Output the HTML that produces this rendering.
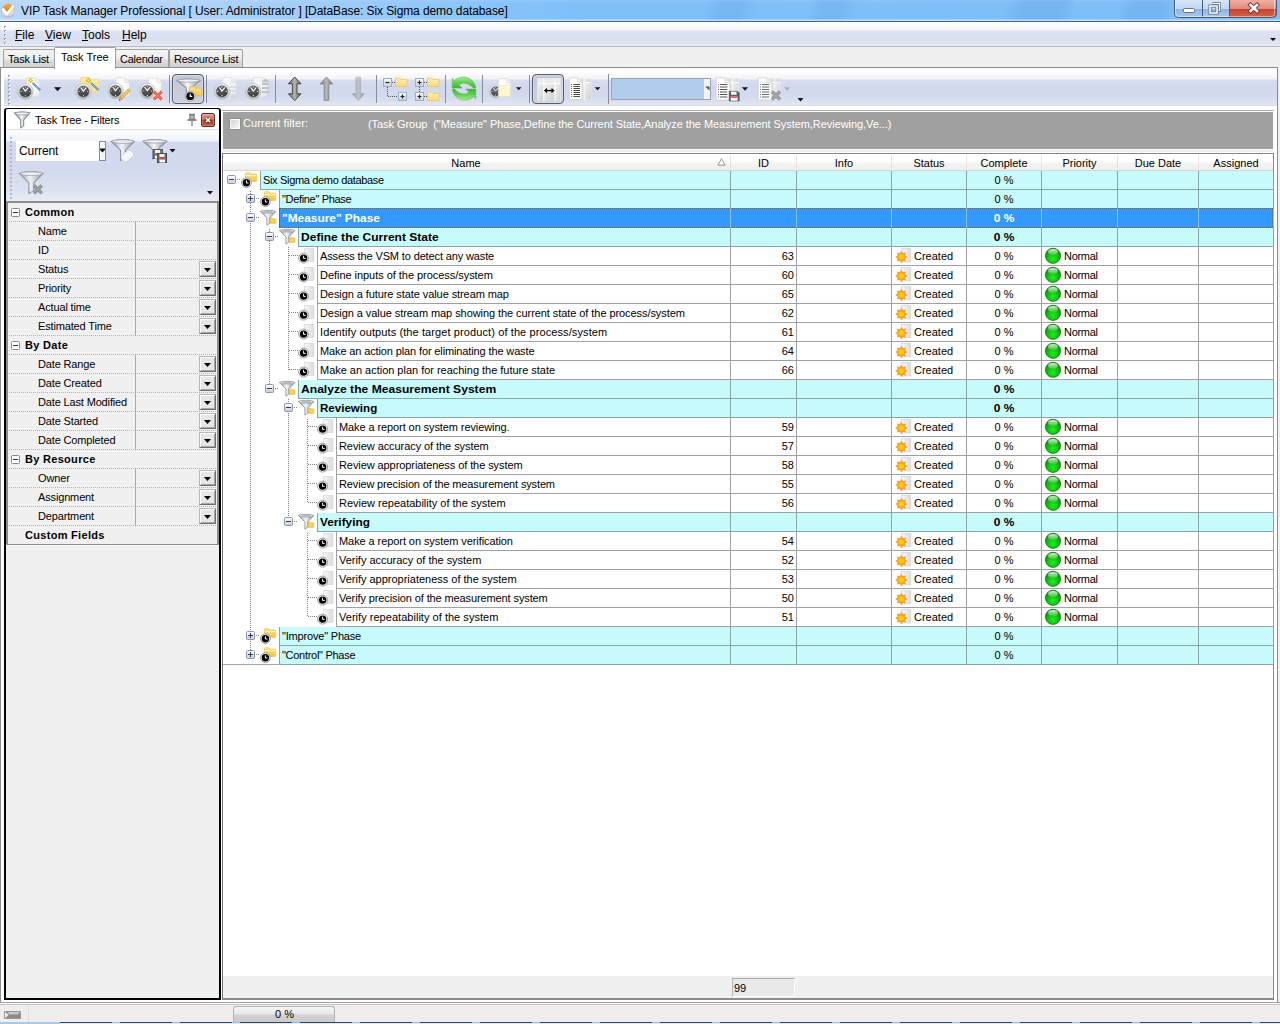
<!DOCTYPE html>
<html><head><meta charset="utf-8"><title>VIP Task Manager Professional</title>
<style>
*{box-sizing:border-box;margin:0;padding:0}
html,body{width:1280px;height:1024px;overflow:hidden;background:#f0f0f0}
body{position:relative;font-family:"Liberation Sans",sans-serif;font-size:11px;color:#000}
div,svg,span{position:absolute}
.t{white-space:nowrap;line-height:14px}
/* title bar */
#title{left:0;top:0;width:1280px;height:21px;background:linear-gradient(105deg,transparent 0,transparent 683px,rgba(40,100,170,.10) 698px,rgba(40,100,170,.10) 718px,transparent 733px,transparent 783px,rgba(40,100,170,.09) 795px,rgba(40,100,170,.09) 815px,transparent 830px,transparent 972px,rgba(40,100,170,.11) 990px,rgba(40,100,170,.11) 1028px,transparent 1040px,transparent 1083px,rgba(40,100,170,.09) 1095px,rgba(40,100,170,.09) 1125px,transparent 1140px),linear-gradient(90deg,#b9d7f8 0,#b5d5f8 150px,#a2cdf8 300px,#8dc5f9 450px,#80c0fa 570px,#7fbff9 900px,#7dbdf8 1280px)}
#titlesh{left:0;top:0;width:1280px;height:21px;background:linear-gradient(180deg,rgba(255,255,255,.10) 0,rgba(255,255,255,0) 3px,rgba(255,255,255,0) 19px,rgba(255,255,255,.5) 20px,rgba(255,255,255,.55) 21px)}
#titleline{left:0;top:21px;width:1280px;height:1px;background:#4c5f76}
#titletxt{left:21px;top:4px;font-size:12px;letter-spacing:-0.095px;color:#000;line-height:15px;white-space:nowrap}
/* menubar */
#menubar{left:0;top:22px;width:1280px;height:25px;background:linear-gradient(180deg,#ffffff 0,#f4f5fb 8px,#dfe3f1 9px,#d9deef 17px,#e3e6f3 23px,#eceef6 24px)}
#menuline{left:0;top:46px;width:1280px;height:1px;background:#b4b8c6}
.mi{top:28px;font-size:12px;line-height:15px;white-space:nowrap}
.mi u{text-decoration:underline;text-underline-offset:1px}
/* tabs */
.tab{top:49px;height:18px;border:1px solid #a0a0a0;border-bottom:none;background:linear-gradient(180deg,#f4f4f4 0,#ececec 9px,#dcdcdc 10px,#d2d2d2 17px);font-size:11px;line-height:12px;white-space:nowrap;border-radius:2px 2px 0 0}
.tab span{position:absolute;top:3px;left:4px;letter-spacing:-.23px}
.tab.act{top:47px;height:22px;background:#fff;z-index:3}
.tab.act span{top:3px;left:6px;letter-spacing:0}
#page{left:0px;top:67px;width:1278px;height:936px;background:#fff;border:1px solid #8c8c8c;border-top-color:#8c8c8c}
/* toolbar */
#tb{left:4px;top:72px;width:1273px;height:34px;background:linear-gradient(180deg,#fefefe 0,#f1f3f9 7px,#d9deef 8px,#d3d9ed 14px,#d4daed 24px,#dce0f0 30px,#e6e9f4 33px,#c9cddb 34px)}
.sep{top:77px;width:1px;height:26px;background:#8a8f9c;box-shadow:1px 0 0 #f4f5fa}
.dd{width:0;height:0;border-left:3px solid transparent;border-right:3px solid transparent;border-top:3px solid #000}
.pressed{border:1px solid #555d6b;border-radius:4px;background:linear-gradient(180deg,#c4c7d6,#cccfdc);box-shadow:inset 0 0 0 1px rgba(255,255,255,.3)}
/* grid */
#grid{left:0;top:0;width:1280px;height:1024px}
.row{left:0;width:1280px;height:19px}
.row>div{white-space:nowrap;line-height:13px}
.row .bg{top:0;height:19px;background:#fff;border-left:1px solid #a0a0a0;border-bottom:1px solid #a0a0a0}
.row.grp .bg{background:#c7fafa;border-color:#88a6a6}
.row.sel .bg{background:#3399ff;top:-1px;height:20px;border-bottom:none;outline:1px dotted #6b6357;outline-offset:-1px;border-left-color:#6b6357}
.nm{top:3px}
.b{font-weight:bold;font-size:11px;transform-origin:0 0}
.nm.b{top:3px}
.row.sel .nm,.row.sel .cco{color:#fff}
.cid{left:731px;width:63px;text-align:right;top:3px}
.cst{left:914px;top:3px}
.cpr{left:1064px;top:3px;letter-spacing:-.3px}
.cco{left:967px;width:74px;text-align:center;top:3px}
.cco.b{top:3px;transform:scaleX(1.09);transform-origin:50% 0}
.ic{overflow:visible}
.vl{width:1px;background-image:repeating-linear-gradient(180deg,#808080 0,#808080 1px,transparent 1px,transparent 2px)}
.hl{height:1px;background-image:repeating-linear-gradient(90deg,#808080 0,#808080 1px,transparent 1px,transparent 2px)}
.cv{z-index:1;top:154px;width:1px;height:520px;background:#a0a0a0}
.hd{top:157px;font-size:11px;text-align:center;line-height:13px}
.hs{top:156px;width:1px;height:13px;background:#e2e2e2}
.pl{left:9px;width:208px;height:1px;background-image:repeating-linear-gradient(90deg,#b4b4b4 0,#b4b4b4 1px,transparent 1px,transparent 2px)}
.pb{font-weight:bold;font-size:11px;letter-spacing:.3px}
.pdd{left:199px;width:17px;height:16px;background:#e6e6e6;border:1px solid;border-color:#b8b8b8 #6e6e6e #6e6e6e #b8b8b8;box-shadow:inset 1px 1px 0 #fff,inset -1px -1px 0 #a6a6a6}
.vls{z-index:2;left:730px;top:0;width:544px;height:19px;background:linear-gradient(#88a6a6,#88a6a6) 0px 0/1px 100% no-repeat,linear-gradient(#88a6a6,#88a6a6) 66px 0/1px 100% no-repeat,linear-gradient(#88a6a6,#88a6a6) 161px 0/1px 100% no-repeat,linear-gradient(#88a6a6,#88a6a6) 236px 0/1px 100% no-repeat,linear-gradient(#88a6a6,#88a6a6) 311px 0/1px 100% no-repeat,linear-gradient(#88a6a6,#88a6a6) 387px 0/1px 100% no-repeat,linear-gradient(#88a6a6,#88a6a6) 468px 0/1px 100% no-repeat,linear-gradient(#88a6a6,#88a6a6) 543px 0/1px 100% no-repeat}
.row.sel .vls{top:0;height:18px;background:linear-gradient(#86c3ff,#86c3ff) 0px 0/1px 100% no-repeat,linear-gradient(#86c3ff,#86c3ff) 66px 0/1px 100% no-repeat,linear-gradient(#86c3ff,#86c3ff) 161px 0/1px 100% no-repeat,linear-gradient(#86c3ff,#86c3ff) 236px 0/1px 100% no-repeat,linear-gradient(#86c3ff,#86c3ff) 311px 0/1px 100% no-repeat,linear-gradient(#86c3ff,#86c3ff) 387px 0/1px 100% no-repeat,linear-gradient(#86c3ff,#86c3ff) 468px 0/1px 100% no-repeat,linear-gradient(#86c3ff,#86c3ff) 543px 0/1px 100% no-repeat}

</style></head><body>
<svg width="0" height="0" style="position:absolute;left:-10px;top:-10px">
<defs>
<linearGradient id="gbtn" x1="0" y1="0" x2="0" y2="1"><stop offset="0" stop-color="#ffffff"/><stop offset="1" stop-color="#c9ccd6"/></linearGradient>
<radialGradient id="gclk" cx=".4" cy=".35" r=".7"><stop offset="0" stop-color="#6a6a6a"/><stop offset="1" stop-color="#222"/></radialGradient>
<linearGradient id="gfold" x1="0" y1="0" x2="0" y2="1"><stop offset="0" stop-color="#fde68e"/><stop offset="1" stop-color="#f4c440"/></linearGradient>
<linearGradient id="gfold2" x1="0" y1="0" x2="0" y2="1"><stop offset="0" stop-color="#fff2bd"/><stop offset="1" stop-color="#f7d873"/></linearGradient>
<linearGradient id="gfun" x1="0" y1="0" x2="1" y2="0"><stop offset="0" stop-color="#8d949b"/><stop offset=".45" stop-color="#f4f6f8"/><stop offset="1" stop-color="#8d949b"/></linearGradient>
<linearGradient id="gsheet" x1="0" y1="0" x2="1" y2="1"><stop offset="0" stop-color="#ffffff"/><stop offset=".6" stop-color="#fafafa"/><stop offset="1" stop-color="#e4e4e4"/></linearGradient>
<linearGradient id="gsheet2" x1="0" y1="0" x2="1" y2="0"><stop offset="0" stop-color="#f8f8f8"/><stop offset="1" stop-color="#dcdcdc"/></linearGradient>
<linearGradient id="garrow" x1="0" y1="0" x2="1" y2="0"><stop offset="0" stop-color="#6a6a6a"/><stop offset=".5" stop-color="#b4b4b4"/><stop offset="1" stop-color="#5c5c5c"/></linearGradient>
<linearGradient id="gcell" x1="0" y1="0" x2="1" y2="1"><stop offset="0" stop-color="#eeeeee"/><stop offset="1" stop-color="#d2d2d2"/></linearGradient>
<linearGradient id="ggr2" x1="0" y1="0" x2="0" y2="1"><stop offset="0" stop-color="#a6ec96"/><stop offset=".5" stop-color="#62cf54"/><stop offset="1" stop-color="#3db733"/></linearGradient>

<!-- expand buttons 9x9 -->
<symbol id="minus" viewBox="0 0 9 9"><rect x=".5" y=".5" width="8" height="8" rx="1" fill="url(#gbtn)" stroke="#8f96a3"/><rect x="2" y="4" width="5" height="1" fill="#2a3a6a"/></symbol>
<symbol id="plus" viewBox="0 0 9 9"><rect x=".5" y=".5" width="8" height="8" rx="1" fill="url(#gbtn)" stroke="#8f96a3"/><rect x="2" y="4" width="5" height="1" fill="#2a3a6a"/><rect x="4" y="2" width="1" height="5" fill="#2a3a6a"/></symbol>

<!-- small clock (used in 16px icons) centered at 0,0 radius r -->
<symbol id="clk" viewBox="-5.5 -5.5 11 11" overflow="visible"><circle r="5" fill="#efefef" stroke="#8c8c8c" stroke-width=".8"/><circle r="3.700" fill="#000"/><path d="M0 -2.400V0.300H2.100" stroke="#fff" stroke-width="1" fill="none"/></symbol>

<!-- folder + clock 18x18 -->
<symbol id="ifolder" viewBox="0 0 18 18">
 <path d="M6.300 1.700h3.400l1.200 1.400h5a.8.800 0 0 1 .8.800v5.800a.8.800 0 0 1-.8.800H6.300a.8.800 0 0 1-.8-.8V2.500a.8.800 0 0 1 .8-.8z" fill="url(#gfold)" stroke="#ecc04a" stroke-width=".7"/>
 <path d="M5.800 4.600h10.600" stroke="#fff8d4" stroke-width=".8"/>
 <use href="#clk" x=".9" y="6.200" width="11" height="11"/>
</symbol>

<!-- funnel + small folder -->
<symbol id="ifilt" viewBox="0 0 18 18">
 <path d="M1.400 2.500 Q9.150 .2 16.900 2.500 L10.800 8.900 V14 L7.900 16.200 V8.900 Z" fill="url(#gfun)" stroke="#858c93" stroke-width=".8" stroke-linejoin="round"/>
 <ellipse cx="9.150" cy="2.700" rx="7.500" ry="1.350" fill="#e4e7ea" stroke="#8b9299" stroke-width=".6"/>
 <ellipse cx="9.150" cy="2.900" rx="4.500" ry=".7" fill="#9aa1a8"/>
 <path d="M11.200 9.200h2.200l.7.900h2.700v4.100h-5.600z" fill="#f8d458" stroke="#e3ae26" stroke-width=".7" stroke-linejoin="round"/>
</symbol>

<!-- task: sheet + clock -->
<symbol id="itask" viewBox="0 0 18 18">
 <path d="M7.500 1.500h9.300v13H7.500z" fill="url(#gsheet2)" stroke="#d4d4d4" stroke-width=".7"/>
 <use href="#clk" x="1.100" y="5.600" width="11" height="11"/>
</symbol>

<!-- status created: sheet + sun -->
<radialGradient id="gsun" cx=".5" cy=".5" r=".5"><stop offset="0" stop-color="#ffe11e"/><stop offset=".55" stop-color="#ffc20e"/><stop offset="1" stop-color="#f89a1c"/></radialGradient>
<symbol id="icreated" viewBox="0 0 18 18">
 <path d="M7.300 1.400h9.400v13.500H7.300z" fill="url(#gsheet2)" stroke="#cfcfcf" stroke-width=".7"/>
 <path d="M7.400 3.500l1.500 2.400 2.700-.8-.8 2.700 2.500 1.500-2.500 1.600.8 2.700-2.700-.8-1.500 2.500-1.500-2.500-2.700.8.800-2.700L1.500 9.300 4 7.800l-.8-2.700 2.700.8z" transform="translate(0 .7)" fill="#f9a01e" stroke="#f2921c" stroke-width=".4" stroke-linejoin="round"/>
 <circle cx="7.400" cy="10" r="3.900" fill="url(#gsun)"/>
</symbol>

<!-- priority green ball -->
<radialGradient id="ggreen" cx=".5" cy=".68" r=".62"><stop offset="0" stop-color="#1df01d"/><stop offset=".55" stop-color="#12c012"/><stop offset="1" stop-color="#0b8a0b"/></radialGradient>
<linearGradient id="ghl" x1="0" y1="0" x2="0" y2="1"><stop offset="0" stop-color="#ffffff" stop-opacity=".85"/><stop offset="1" stop-color="#ffffff" stop-opacity=".15"/></linearGradient>
<symbol id="igreen" viewBox="0 0 18 18">
 <circle cx="9" cy="8.800" r="7.600" fill="url(#ggreen)" stroke="#0d7d0d" stroke-width=".8"/>
 <ellipse cx="9" cy="4.900" rx="4.900" ry="2.900" fill="url(#ghl)"/>
</symbol>

<!-- big toolbar clock: 18x18 box, centered at 0,0, ring r=7.8 -->
<linearGradient id="gring" x1="0" y1="0" x2="0" y2="1"><stop offset="0" stop-color="#fafafa"/><stop offset=".55" stop-color="#d6d6d6"/><stop offset="1" stop-color="#b9b9b9"/></linearGradient>
<radialGradient id="gface" cx=".45" cy=".3" r=".8"><stop offset="0" stop-color="#6b6b6b"/><stop offset="1" stop-color="#303030"/></radialGradient>
<symbol id="bclk" viewBox="-9 -9 18 18" overflow="visible">
 <circle r="8.300" fill="#9aa0b0" opacity=".25"/>
 <circle r="7.700" fill="url(#gring)" stroke="#b4b4b4" stroke-width=".5"/>
 <circle r="5.800" fill="url(#gface)" stroke="#8a8a8a" stroke-width=".4"/>
 <path d="M-2.400 -3.600L0 -0.300L2.600 -3.600" stroke="#fff" stroke-width="1.100" fill="none" stroke-linecap="round" stroke-linejoin="round"/>
 <circle cx="0" cy="-4.500" r=".55" fill="#fff"/><circle cx="0" cy="4.300" r=".6" fill="#fff"/><circle cx="-4.300" cy="0" r=".6" fill="#fff"/><circle cx="4.300" cy="0" r=".6" fill="#fff"/>
</symbol>
<!-- big sheet -->
<symbol id="bsheet" viewBox="0 0 16 22" overflow="visible">
 <path d="M.5 .5h10l5 5v16H.5z" fill="url(#gsheet)" stroke="#d5d5d5" stroke-width=".8"/>
 <path d="M10.5 .5v5h5" fill="#f4f4f4" stroke="#d0d0d0" stroke-width=".7"/>
</symbol>
<!-- big funnel -->
<symbol id="bfun" viewBox="0 0 24 24" overflow="visible" preserveAspectRatio="none">
 <path d="M1 3 Q11 -1 21 3 L13.2 12.5 V20.5 L9 23.5 V12.5 Z" fill="url(#gfun)" stroke="#868d94" stroke-width=".9"/>
 <ellipse cx="11" cy="3.3" rx="9.3" ry="1.9" fill="#eef0f2" stroke="#959ca3" stroke-width=".7"/>
</symbol>
</defs></svg>

<!-- title bar -->
<div id="title"></div><div id="titlesh"></div><div id="titleline"></div>
<svg style="left:0px;top:1px" width="18" height="18" viewBox="0 0 18 18">
 <defs><radialGradient id="gapp" cx=".45" cy=".35" r=".75"><stop offset="0" stop-color="#ffffff"/><stop offset=".65" stop-color="#e2e2e2"/><stop offset="1" stop-color="#a2a2a2"/></radialGradient>
 <linearGradient id="gor" x1="0" y1="0" x2="0" y2="1"><stop offset="0" stop-color="#f7a540"/><stop offset="1" stop-color="#ee7f14"/></linearGradient></defs>
 <circle cx="8" cy="9.800" r="6.700" fill="url(#gapp)" stroke="#aaaaaa" stroke-width=".5"/>
 <path d="M2.600 6.600Q4 3.600 7.500 3.100Q10.500 2.800 12.500 4.300L7.200 11.300z" fill="url(#gor)"/>
 <path d="M2.400 7.600L6.900 13.300L13.600 4.400" fill="none" stroke="#b4b4b4" stroke-width="3" stroke-linejoin="round" stroke-linecap="round" opacity=".55" transform="translate(.5 .7)"/>
 <path d="M2.400 7.600L6.900 13.300L13.600 4.400" fill="none" stroke="#ffffff" stroke-width="2.500" stroke-linejoin="round" stroke-linecap="butt"/>
</svg>
<div id="titletxt">VIP Task Manager Professional [ User: Administrator ] [DataBase: Six Sigma demo database]</div>
<!-- caption buttons -->
<svg style="left:1170px;top:0" width="110" height="22" viewBox="1170 0 110 22">
 <defs>
  <linearGradient id="gcb" x1="0" y1="0" x2="0" y2="1"><stop offset="0" stop-color="#d5e6f8"/><stop offset=".48" stop-color="#c0d8f2"/><stop offset=".5" stop-color="#8fb5df"/><stop offset="1" stop-color="#a9cbee"/></linearGradient>
  <linearGradient id="gcx" x1="0" y1="0" x2="0" y2="1"><stop offset="0" stop-color="#f0b0a4"/><stop offset=".48" stop-color="#e08a7c"/><stop offset=".5" stop-color="#c8402c"/><stop offset="1" stop-color="#d4674f"/></linearGradient>
  <clipPath id="cbclip"><path d="M1174 -2h103v15.5a4 4 0 0 1-4 4h-95a4 4 0 0 1-4-4z"/></clipPath>
 </defs>
 <g clip-path="url(#cbclip)">
  <rect x="1174" y="0" width="56" height="18" fill="url(#gcb)"/>
  <rect x="1230" y="0" width="48" height="18" fill="url(#gcx)"/>
 </g>
 <path d="M1174.5 -2v15.5a4 4 0 0 0 4 4h94a4 4 0 0 0 4-4V-2" fill="none" stroke="#4a5a72" stroke-width="1"/>
 <path d="M1202.5 0v17M1229.5 0v17" stroke="#4a5a72" stroke-width="1"/>
 <path d="M1175.5 0v13.5a3 3 0 0 0 3 3h93a3 3 0 0 0 3-3V0" fill="none" stroke="rgba(255,255,255,.45)" stroke-width="1"/>
 <rect x="1183.5" y="8.5" width="11" height="4" rx="1" fill="#fff" stroke="#5a6a80" stroke-width=".9"/>
 <path d="M1212.500 3.5h7v7h-2" fill="none" stroke="#5a6a80" stroke-width="2.6"/><path d="M1212.500 3.5h7v7h-2" fill="none" stroke="#fff" stroke-width="1.2"/>
 <rect x="1210" y="6" width="7" height="7" fill="none" stroke="#5a6a80" stroke-width="3"/><rect x="1210" y="6" width="7" height="7" fill="none" stroke="#fff" stroke-width="1.5"/>
 <path d="M1250.500 5l6.500 6m0-6l-6.500 6" stroke="#6a3030" stroke-width="4.4" stroke-linecap="square"/><path d="M1250.500 5l6.500 6m0-6l-6.500 6" stroke="#fff" stroke-width="2.600" stroke-linecap="square"/>
</svg>
<!-- menu bar -->
<div id="menubar"></div><div id="menuline"></div>
<svg style="left:3px;top:25px" width="4" height="20"><g fill="#9aa0b4"><rect x="1" y="1" width="2" height="2"/><rect x="1" y="5" width="2" height="2"/><rect x="1" y="9" width="2" height="2"/><rect x="1" y="13" width="2" height="2"/><rect x="1" y="17" width="2" height="2"/></g><g fill="#fff"><rect x="2" y="2" width="1" height="1"/><rect x="2" y="6" width="1" height="1"/><rect x="2" y="10" width="1" height="1"/><rect x="2" y="14" width="1" height="1"/><rect x="2" y="18" width="1" height="1"/></g></svg>
<div class="mi" style="left:15px"><u>F</u>ile</div>
<div class="mi" style="left:45px"><u>V</u>iew</div>
<div class="mi" style="left:82px"><u>T</u>ools</div>
<div class="mi" style="left:122px"><u>H</u>elp</div>
<div class="dd" style="left:1270px;top:38px"></div>
<!-- tabs + page -->
<div id="page"></div>
<div class="tab" style="left:3px;width:52px"><span>Task List</span></div>
<div class="tab act" style="left:54px;width:62px"><span>Task Tree</span></div>
<div class="tab" style="left:115px;width:54px"><span>Calendar</span></div>
<div class="tab" style="left:169px;width:74px"><span>Resource List</span></div>
<!-- toolbar -->
<div id="tb"></div>
<div class="pressed" style="left:172px;top:74px;width:32px;height:30px"></div>
<div class="pressed" style="left:532px;top:74px;width:32px;height:30px"></div>
<svg style="left:0;top:66px" width="820" height="46" viewBox="0 66 820 46">
 <!-- grip -->
 <g><rect x="8" y="75" width="2" height="2" fill="#9ea4b6"/><rect x="9" y="76" width="1.500" height="1.500" fill="#f4f5fa"/><rect x="8" y="79" width="2" height="2" fill="#9ea4b6"/><rect x="9" y="80" width="1.500" height="1.500" fill="#f4f5fa"/><rect x="8" y="83" width="2" height="2" fill="#9ea4b6"/><rect x="9" y="84" width="1.500" height="1.500" fill="#f4f5fa"/><rect x="8" y="87" width="2" height="2" fill="#9ea4b6"/><rect x="9" y="88" width="1.500" height="1.500" fill="#f4f5fa"/><rect x="8" y="91" width="2" height="2" fill="#9ea4b6"/><rect x="9" y="92" width="1.500" height="1.500" fill="#f4f5fa"/><rect x="8" y="95" width="2" height="2" fill="#9ea4b6"/><rect x="9" y="96" width="1.500" height="1.500" fill="#f4f5fa"/><rect x="8" y="99" width="2" height="2" fill="#9ea4b6"/><rect x="9" y="100" width="1.500" height="1.500" fill="#f4f5fa"/><rect x="8" y="103" width="2" height="2" fill="#9ea4b6"/><rect x="9" y="104" width="1.500" height="1.500" fill="#f4f5fa"/></g>
 <!-- separators -->
 <g stroke="#878c99" stroke-width="1"><path d="M169.500 75v28M206.500 75v28M275.500 75v28M376.500 75v28M445.500 75v28M482.500 75v28M529.500 75v28M608.500 74v30"/></g>
 <!-- 1 new task -->
 <use href="#bsheet" x="26" y="77.300" width="14.300" height="20.400"/>
 <path d="M32.600 83L40.300 90.300" stroke="#4f86d6" stroke-width="1.900"/><path d="M32.600 83L40.300 90.300" stroke="#b6d2f6" stroke-width=".9" stroke-dasharray="1 .6"/>
 <path d="M30.500 77.800v5.200M27.900 80.400h5.200M28.700 78.600l3.600 3.600M32.300 78.600l-3.600 3.600" stroke="#d8b400" stroke-width="1"/><rect x="29.500" y="79.400" width="2" height="2" fill="#fff89a"/>
 <use href="#bclk" x="16.400" y="82.500" width="18" height="18"/>
 <path d="M54 87.200h7.200l-3.600 4z" fill="#111"/>
 <!-- 2 new folder -->
 <path d="M81.500 77.500h7.500l2 2.200h7.500a.8.800 0 0 1 .8.800v10.600a.8.800 0 0 1-.8.800H81.500a.8.800 0 0 1-.8-.8V78.300a.8.800 0 0 1 .8-.8z" fill="#fbeaa6" stroke="#efd684" stroke-width=".8"/>
 <path d="M81 82h18v9H81z" fill="#f9e08e" opacity=".7"/>
 <path d="M90.900 83L98.600 90.300" stroke="#4f86d6" stroke-width="1.900"/><path d="M90.900 83L98.600 90.300" stroke="#b6d2f6" stroke-width=".9" stroke-dasharray="1 .6"/>
 <path d="M88.400 77.800v5.200M85.800 80.400h5.200M86.600 78.600l3.600 3.600M90.200 78.600l-3.600 3.600" stroke="#c9a600" stroke-width="1"/><rect x="87.400" y="79.400" width="2" height="2" fill="#fff89a"/>
 <use href="#bclk" x="74.400" y="82.500" width="18" height="18"/>
 <!-- 3 edit -->
 <use href="#bsheet" x="115.500" y="77.300" width="14.500" height="20.300"/>
 <use href="#bclk" x="106.500" y="82" width="18" height="18"/>
 <path d="M130.300 90.600l-1.900-1.700-8.300 8.600 1.900 1.800z" fill="#f5c556" stroke="#c08a22" stroke-width=".6"/><path d="M120.100 97.500l1.900 1.800-2.900 1.100z" fill="#e8d0a0" stroke="#8a6a30" stroke-width=".4"/><path d="M119.100 100.400l.45-1.250.95.900z" fill="#222"/>
 <!-- 4 delete -->
 <use href="#bsheet" x="148" y="77.300" width="14" height="20"/>
 <use href="#bclk" x="138.300" y="82" width="18" height="18"/>
 <path d="M153.800 91.600l8 7.800m0-7.800l-8 7.800" stroke="#ee4a28" stroke-width="2.800"/><path d="M153.800 91.600l8 7.800m0-7.800l-8 7.800" stroke="#fba27c" stroke-width=".9"/>
 <!-- 5 filter (pressed) -->
 <use href="#bfun" x="175.700" y="78" width="28.300" height="19"/>
 <path d="M190 86.800h4.200l1.300 1.500h5.600a.6.600 0 0 1 .6.600v6.300a.6.600 0 0 1-.6.600H190a.6.600 0 0 1-.6-.6V87.400a.6.600 0 0 1 .6-.6z" fill="url(#gfold)" stroke="#e9b836" stroke-width=".7"/>
 <circle cx="190.200" cy="96.200" r="5.100" fill="#e2e2e2" stroke="#8a8a8a" stroke-width=".6"/><circle cx="190.200" cy="96.200" r="3.900" fill="#0a0a0a"/><path d="M190.200 93.800V96.400H192.300" stroke="#fff" stroke-width="1.100" fill="none"/>
 <!-- 6,7 move -->
 <use href="#bsheet" x="222" y="77" width="15" height="21" opacity=".75"/>
 <g stroke="#dcdcdc" stroke-width="2"><path d="M230 87h7M230 91h7M230 95h7"/></g><path d="M229.500 96h8l-4 3.500z" fill="#d8d8d8"/>
 <use href="#bclk" x="213" y="82.400" width="18" height="18"/>
 <use href="#bsheet" x="253" y="77" width="15" height="21" opacity=".75"/>
 <g stroke="#c4c4c4" stroke-width="2"><path d="M262 84h7M262 88h7M262 92h7"/></g><path d="M261.500 82h8l-4-3.500z" fill="#c0c0c0"/>
 <use href="#bclk" x="244.300" y="82.400" width="18" height="18"/>
 <!-- arrows -->
 <path d="M294.700 77l6.300 6.800h-4v10h4l-6.300 6.800-6.300-6.800h4v-10h-4z" fill="url(#garrow)" stroke="#3c3c3c" stroke-width=".9"/>
 <path d="M326.500 77l6.300 7h-4v16.300h-4.600V84h-4z" fill="url(#garrow)" stroke="#7a7a7a" stroke-width=".9" opacity=".85"/>
 <path d="M358.300 100.500l6.300-7h-4V77.200h-4.600v16.300h-4z" fill="url(#garrow)" stroke="#9a9a9a" stroke-width=".9" opacity=".6"/>
 <!-- collapse -->
 <g>
  <path d="M387.500 87v9.500h11" stroke="#555" stroke-width="1" stroke-dasharray="1 1" fill="none"/><path d="M392 82.500h3" stroke="#555" stroke-dasharray="1 1"/>
  <rect x="383.500" y="78.500" width="8" height="8" fill="url(#gbtn)" stroke="#9ab0c8"/><path d="M385.500 82.500h4" stroke="#222" stroke-width="1.200"/>
  <path d="M395.500 78h4.500l1 1.500h6v7h-11.500z" fill="url(#gfold2)" stroke="#efc75a" stroke-width=".8" stroke-linejoin="round"/>
  <rect x="398.500" y="92.500" width="8" height="8" fill="url(#gbtn)" stroke="#9ab0c8"/><path d="M400.500 96.500h4M402.500 94.500v4" stroke="#222" stroke-width="1.200"/>
 </g>
 <!-- expand -->
 <g>
  <path d="M419.500 87v5.500" stroke="#555" stroke-dasharray="1 1"/><path d="M424 82.500h3M424 96.500h3" stroke="#555" stroke-dasharray="1 1"/>
  <rect x="415.500" y="78.500" width="8" height="8" fill="url(#gbtn)" stroke="#9ab0c8"/><path d="M417.500 82.500h4M419.500 80.500v4" stroke="#222" stroke-width="1.200"/>
  <rect x="415.500" y="92.500" width="8" height="8" fill="url(#gbtn)" stroke="#9ab0c8"/><path d="M417.500 96.500h4M419.500 94.500v4" stroke="#222" stroke-width="1.200"/>
  <path d="M427.500 78h4.500l1 1.500h6v7h-11.500z" fill="url(#gfold2)" stroke="#efc75a" stroke-width=".8" stroke-linejoin="round"/>
  <path d="M427.500 92h4.500l1 1.500h6v7h-11.500z" fill="url(#gfold2)" stroke="#efc75a" stroke-width=".8" stroke-linejoin="round"/>
 </g>
 <!-- refresh -->
 <g fill="url(#ggr2)" stroke="#4fbb43" stroke-width=".5" stroke-linejoin="round">
  <path id="rfa" d="M452.200 78.200V88.100H462.100L459 85C460.400 83.700 462 83.200 463.800 83.200C467.300 83.200 471 84.800 473.300 88.100H475.800C475 82 470 77 463.800 77C460.100 77 456.700 78.300 454.500 80.400z"/>
  <use href="#rfa" transform="rotate(180 464 88.600)"/>
 </g>
 <!-- notes icon -->
 <use href="#bclk" x="488.100" y="83.800" width="15" height="15" opacity=".9"/>
 <use href="#bsheet" x="498" y="77.600" width="13.500" height="19.800"/>
 <rect x="499" y="85.300" width="11" height="11" fill="#fbf8d2" stroke="#ebe6b4" stroke-width=".6"/>
 <path d="M516 87.300h5.400l-2.700 3z" fill="#111"/>
 <!-- fit columns (pressed) -->
 <g>
  <rect x="537.500" y="78.500" width="23" height="22.500" fill="#fdfdfd"/>
  <g fill="#ebebeb"><rect x="538" y="79" width="5.200" height="4"/><rect x="544.300" y="79" width="10.200" height="4"/><rect x="555.600" y="79" width="4.600" height="4"/></g>
  <g fill="url(#gcell)"><rect x="538" y="84.200" width="5.200" height="16.600"/><rect x="544.300" y="84.200" width="10.200" height="16.600"/><rect x="555.600" y="84.200" width="4.600" height="16.600"/></g>
  <path d="M545 90.600h8.500" stroke="#000" stroke-width="1.300"/><path d="M547 88l-3 2.600 3 2.600zM551.500 88l3 2.600-3 2.600z" fill="#000"/>
 </g>
 <!-- columns icon -->
 <g>
  <rect x="577" y="78" width="14.200" height="22" fill="#fdfdfd"/>
  <g fill="url(#gcell)"><rect x="577" y="78.500" width="6.500" height="3.500"/><rect x="584.500" y="78.500" width="6.500" height="3.500"/><rect x="577" y="83" width="6.500" height="16.800"/><rect x="584.500" y="83" width="6.500" height="16.800"/></g>
  <path d="M569.300 77.800h8.200l4.500 4.500v17.200h-12.700z" fill="#fff" stroke="#d2d2d2" stroke-width=".8"/><path d="M577.500 77.800v4.500h4.500" fill="#f0f0f0" stroke="#d2d2d2" stroke-width=".6"/>
  <g stroke="#4a4a4a" stroke-width="1"><path d="M573.500 84.500h6.500M573.500 86.500h6.500M573.500 88.500h6.500M573.500 90.500h6.500M573.500 92.500h6.500M573.500 94.500h6.500M573.500 96.500h6.500"/></g>
  <g fill="#777"><rect x="571" y="84" width="1" height="1"/><rect x="571" y="86" width="1" height="1"/><rect x="571" y="88" width="1" height="1"/><rect x="571" y="90" width="1" height="1"/><rect x="571" y="92" width="1" height="1"/><rect x="571" y="94" width="1" height="1"/><rect x="571" y="96" width="1" height="1"/></g>
  <path d="M594.800 87.300h5.600l-2.800 3z" fill="#111"/>
 </g>
 <!-- combo -->
 <rect x="611.500" y="78.500" width="99" height="21" fill="#b0ceec" stroke="#9aa2ac"/>
 <rect x="704" y="79" width="6" height="20" fill="#f2f2f2"/><path d="M705 86.500h4.500v4z" fill="#555"/>
 <!-- save view -->
 <g>
  <rect x="723.8" y="77.500" width="15" height="22.500" fill="#fdfdfd"/>
  <g fill="url(#gcell)"><rect x="723.8" y="78" width="7.800" height="3.800"/><rect x="732.6" y="78" width="6" height="3.800"/><rect x="723.8" y="82.800" width="7.800" height="17"/><rect x="732.6" y="82.800" width="6" height="17"/></g>
  <path d="M716.2 77.800h8.600l5 5v17.200h-13.600z" fill="#fff" stroke="#d0d0d0" stroke-width=".8"/><path d="M724.8 77.800v5h5" fill="#ededed" stroke="#d0d0d0" stroke-width=".6"/>
  <path d="M720.0 84.5h7.300M720.0 87h7.300M720.0 89.5h7.300M720.0 92h7.300M720.0 94.5h7.300M720.0 97h7.300" stroke="#555" stroke-width="1.100"/>
  <g fill="#777"><rect x="718.0" y="84.0" width="1" height="1"/><rect x="718.0" y="86.5" width="1" height="1"/><rect x="718.0" y="89.0" width="1" height="1"/><rect x="718.0" y="91.5" width="1" height="1"/><rect x="718.0" y="94.0" width="1" height="1"/><rect x="718.0" y="96.5" width="1" height="1"/></g>
  <path d="M729.200 91.300h8.300l1.700 1.700v8h-10z" fill="#5f5f5f" stroke="#4a4a4a" stroke-width=".6"/><rect x="731" y="91.600" width="5.600" height="3.200" fill="#f2f2f2"/><rect x="730.800" y="96.300" width="6.800" height="4.400" fill="#fff"/><rect x="730.800" y="96.300" width="6.800" height="1.500" fill="#e6484a"/>
  <path d="M742 87.300h6l-3 3.400z" fill="#111"/>
 </g>
 <!-- delete view -->
 <g opacity=".92">
  <rect x="765.8" y="77.500" width="15" height="22.500" fill="#fdfdfd"/>
  <g fill="url(#gcell)"><rect x="765.8" y="78" width="7.800" height="3.800"/><rect x="774.6" y="78" width="6" height="3.800"/><rect x="765.8" y="82.800" width="7.800" height="17"/><rect x="774.6" y="82.800" width="6" height="17"/></g>
  <path d="M758.2 77.800h8.600l5 5v17.200h-13.600z" fill="#fff" stroke="#d0d0d0" stroke-width=".8"/><path d="M766.8 77.800v5h5" fill="#ededed" stroke="#d0d0d0" stroke-width=".6"/>
  <path d="M762.0 84.5h7.300M762.0 87h7.300M762.0 89.5h7.300M762.0 92h7.300M762.0 94.5h7.300M762.0 97h7.300" stroke="#666" stroke-width="1.100"/>
  <g fill="#777"><rect x="760.0" y="84.0" width="1" height="1"/><rect x="760.0" y="86.5" width="1" height="1"/><rect x="760.0" y="89.0" width="1" height="1"/><rect x="760.0" y="91.5" width="1" height="1"/><rect x="760.0" y="94.0" width="1" height="1"/><rect x="760.0" y="96.5" width="1" height="1"/></g>
  <path d="M772 91.500l8 8m0-8l-8 8" stroke="#8c8c8c" stroke-width="3.200"/><path d="M772 91.500l8 8m0-8l-8 8" stroke="#bdbdbd" stroke-width="1"/>
  <path d="M784 87.300h6l-3 3.400z" fill="#a8acb8"/>
 </g>
 <path d="M797.500 98h6l-3 3.500z" fill="#111"/>
</svg>
<!-- filter bar -->
<div style="left:222px;top:110px;width:1052px;height:40px;background:#fafafa;border-top:1px solid #adadad"></div>
<div style="left:222px;top:150px;width:1052px;height:2px;background:#f0f0f0"></div>
<div style="left:223px;top:112px;width:1050px;height:37px;background:#a0a0a0"></div>
<div style="left:229px;top:118px;width:12px;height:12px;background:linear-gradient(135deg,#cfcfcf,#fbfbfb);border:1px solid #8e8f8f;box-shadow:inset 0 0 0 1px #f8f8f8"></div>
<div class="t" style="left:243px;top:116px;color:#fff;letter-spacing:.1px">Current filter:</div>
<div class="t" style="left:368px;top:117px;color:#fff;letter-spacing:-.058px;white-space:pre">(Task Group  ("Measure" Phase,Define the Current State,Analyze the Measurement System,Reviewing,Ve...)</div>
<!-- grid frame + header -->
<div style="left:222px;top:153px;width:1052px;height:847px;background:#fff;border-top:1px solid #848484;border-left:1px solid #707070;border-right:1px solid #8a8a8a;border-bottom:2px solid #8c8c8c"></div>
<div style="left:223px;top:154px;width:1050px;height:17px;background:linear-gradient(180deg,#fff 0,#fff 8px,#f4f4f4 9px,#efefef 16px);border-bottom:1px solid #d5d5d5"></div>
<div class="hd" style="left:223px;width:486px">Name</div>
<svg style="left:717px;top:158px" width="9" height="8"><path d="M4.500 .8L.8 7.200h7.400z" fill="#fff" stroke="#8a8a8a" stroke-width=".9"/></svg>
<div class="hd" style="left:731px;width:65px">ID</div>
<div class="hd" style="left:797px;width:94px">Info</div>
<div class="hd" style="left:892px;width:74px">Status</div>
<div class="hd" style="left:967px;width:74px">Complete</div>
<div class="hd" style="left:1042px;width:75px">Priority</div>
<div class="hd" style="left:1118px;width:80px">Due Date</div>
<div class="hd" style="left:1199px;width:74px">Assigned</div>
<div class="hs" style="left:730px"></div><div class="hs" style="left:796px"></div><div class="hs" style="left:891px"></div><div class="hs" style="left:966px"></div><div class="hs" style="left:1041px"></div><div class="hs" style="left:1117px"></div><div class="hs" style="left:1198px"></div>
<div style="left:223px;top:664px;width:1050px;height:1px;background:#a8a8a8"></div>
<!-- footer -->
<div style="left:223px;top:976px;width:1050px;height:22px;background:#f0f0f0"></div>
<div style="left:732px;top:978px;width:63px;height:19px;background:#e7e9eb;border:1px solid #fbfbfb;border-top-color:#a9a9a9;border-left-color:#b4b4b4"></div>
<div class="t" style="left:734px;top:981px">99</div>
<!-- bottom -->
<div style="left:0;top:1002px;width:1280px;height:1px;background:#a0a0a0"></div>
<div style="left:0;top:1003px;width:1280px;height:1px;background:#fff"></div>
<div style="left:0;top:1004px;width:1280px;height:1px;background:#c4c4c4"></div>
<div style="left:0;top:1005px;width:1280px;height:17px;background:#f0edec"></div>
<div style="left:28px;top:1005px;width:1px;height:17px;background:#dcdcdc"></div>
<svg style="left:4px;top:1011px" width="18" height="9"><rect x="0" y="0" width="17" height="8" fill="#8b8b8b"/><path d="M4 1h12l-2.500 2.500H5z" fill="#c9c9c9"/><path d="M1 .8l3.500 3.200L1 7.200z" fill="#f0f0f0"/><rect x=".25" y=".25" width="16.500" height="7.500" fill="none" stroke="#a2a2a2" stroke-width=".5"/></svg>
<div style="left:233px;top:1006px;width:102px;height:16px;border:1px solid #b0b0b0;border-bottom:none;border-radius:3px 3px 0 0;background:linear-gradient(180deg,#f6f6f6 0,#e6e6e6 7px,#d2d2d2 8px,#cacaca 16px)"></div>
<div class="t" style="left:233px;top:1007px;width:103px;text-align:center">0 %</div>
<div style="left:0;top:1022px;width:1280px;height:1px;background:repeating-linear-gradient(90deg,#33475e 0,#33475e 52px,#9fc0e6 52px,#9fc0e6 60px)"></div><div style="left:0;top:1022px;width:60px;height:2px;background:#a9c8ea"></div><div style="left:60px;top:1023px;width:1220px;height:1px;background:#dfe9f5"></div>

<!-- left panel -->
<div style="left:4px;top:108px;width:217px;height:892px;background:#000;border-radius:3px 3px 0 0"></div>
<div style="left:6px;top:109px;width:213px;height:889px;background:#f0f0f0;border-radius:2px 2px 0 0"></div>
<div style="left:6px;top:109px;width:213px;height:21px;background:#fff;border-radius:2px 2px 3px 3px;border-bottom:1px solid #dcdfe8"></div>
<div style="left:6px;top:130px;width:213px;height:71px;background:linear-gradient(180deg,#fdfdfe 0,#f1f3f9 11px,#d3d9ee 12px,#d4daee 40px,#dbe0f0 58px,#e8ebf5 71px)"></div>
<svg style="left:13px;top:111px" width="20.500" height="18.500" viewBox="0 0 18 18" preserveAspectRatio="none"><path d="M1.200 2 Q8 -0.300 14.800 2 L9.400 8.600 V14.400 L6.800 16.400 V8.600 Z" fill="url(#gfun)" stroke="#7d848b" stroke-width=".9"/><ellipse cx="8" cy="2.400" rx="6.200" ry="1.300" fill="#f2f4f6" stroke="#8e959c" stroke-width=".6"/></svg>
<div class="t" style="left:35px;top:113px;font-size:11px;letter-spacing:-.16px">Task Tree - Filters</div>
<svg style="left:186px;top:113px" width="12" height="14"><path d="M3 1.500h6" stroke="#777" stroke-width="1.400"/><path d="M4 2h4l.5 4h-5z" fill="#b8b8b8" stroke="#777" stroke-width=".9"/><path d="M1.500 7h9" stroke="#707070" stroke-width="1.600"/><path d="M6 8v5" stroke="#777" stroke-width="1.200"/></svg>
<div style="left:201px;top:113px;width:14px;height:14px;border:1px solid #5c2a22;border-radius:2px;background:linear-gradient(180deg,#dca092 0,#c8685a 45%,#a83a26 55%,#c05a48 100%);box-shadow:inset 0 0 0 1px rgba(255,200,190,.35)"></div>
<svg style="left:201px;top:113px" width="14" height="14"><path d="M5 5l4 4m0-4l-4 4" stroke="#6a2a22" stroke-width="3"/><path d="M5 5l4 4m0-4l-4 4" stroke="#fff" stroke-width="1.700"/></svg>
<!-- left toolbar -->
<svg style="left:10px;top:136px" width="3" height="64"><g fill="#b4b9ca"><rect x="0" y="1" width="2" height="2"/><rect x="0" y="5" width="2" height="2"/><rect x="0" y="9" width="2" height="2"/><rect x="0" y="13" width="2" height="2"/><rect x="0" y="17" width="2" height="2"/><rect x="0" y="21" width="2" height="2"/><rect x="0" y="25" width="2" height="2"/><rect x="0" y="29" width="2" height="2"/><rect x="0" y="33" width="2" height="2"/><rect x="0" y="37" width="2" height="2"/><rect x="0" y="41" width="2" height="2"/><rect x="0" y="45" width="2" height="2"/><rect x="0" y="49" width="2" height="2"/><rect x="0" y="53" width="2" height="2"/><rect x="0" y="57" width="2" height="2"/><rect x="0" y="61" width="2" height="2"/></g></svg>
<div style="left:16px;top:141px;width:84px;height:20px;background:#fff"></div>
<div class="t" style="left:19px;top:144px;font-size:12px;letter-spacing:-.1px">Current</div>
<div style="left:99px;top:141px;width:7px;height:20px;background:#f4f4f4;border:1px solid #8a8a8a"></div>
<svg style="left:100px;top:148px" width="5" height="5"><path d="M0 .5h5v1.200L2.500 4.500 0 1.700z" fill="#111"/></svg>
<svg style="left:108px;top:136px" width="72" height="62" viewBox="108 136 72 62">
 <use href="#bfun" x="110" y="138.500" width="28" height="22.500" opacity=".95"/>
 <rect x="121" y="152" width="13" height="8" rx="3" transform="rotate(-38 127.500 156)" fill="#f6f6f6" stroke="#cdcdcd" stroke-width=".9"/>
 <use href="#bfun" x="141.800" y="138.500" width="28.700" height="21"/>
 <g><rect x="153.500" y="149.500" width="9" height="9" fill="#7a7a7a" stroke="#5a5a5a"/><rect x="155" y="150" width="5" height="3" fill="#eee"/><rect x="155" y="155" width="6" height="3.500" fill="#fff"/><rect x="155" y="154.500" width="6" height="1.200" fill="#e04848"/>
 <rect x="157.500" y="153.500" width="9" height="9" fill="#6e6e6e" stroke="#4a4a4a"/><rect x="159.500" y="154" width="5" height="3" fill="#eee"/><rect x="159.500" y="159" width="5.500" height="3.500" fill="#fff"/><rect x="159.500" y="158.300" width="5.500" height="1.300" fill="#e04848"/></g>
 <path d="M169.500 149h6l-3 3.500z" fill="#111"/>
</svg>
<svg style="left:16px;top:168px" width="32" height="30" viewBox="16 168 32 30">
 <use href="#bfun" x="18.100" y="170.500" width="28.700" height="23.400" opacity=".9"/>
 <path d="M34 185.500l7.800 7.800m0-7.800l-7.800 7.800" stroke="#8c8c8c" stroke-width="3.200"/><path d="M34 185.500l7.800 7.800m0-7.800l-7.800 7.800" stroke="#b8b8b8" stroke-width="1"/>
</svg>
<svg style="left:207px;top:191px" width="7" height="4"><path d="M0 0h6l-3 3.500z" fill="#111"/></svg>
<!-- property grid -->
<div style="left:6px;top:201px;width:213px;height:344px;border:2px solid #8c8c8c;border-left:2px solid #8c8c8c;border-bottom:1px solid #8c8c8c;background:#f0f0f0"></div>
<div style="left:6px;top:545px;width:213px;height:1px;background:#fafafa"></div>

<div class="pl" style="top:221px"></div>
<svg style="left:11px;top:208px" width="9" height="9"><rect x=".5" y=".5" width="8" height="8" rx="1" fill="#fff" stroke="#8a8a8a"/><rect x="2" y="4" width="5" height="1" fill="#333"/></svg>
<div class="t pb" style="left:25px;top:205px">Common</div>
<div class="pl" style="top:240px"></div>
<div class="t" style="left:38px;top:224px;letter-spacing:-.15px">Name</div>
<div style="left:135px;top:222px;width:1px;height:19px;background:#a8a8a8"></div>
<div class="pl" style="top:259px"></div>
<div class="t" style="left:38px;top:243px;letter-spacing:-.15px">ID</div>
<div style="left:135px;top:241px;width:1px;height:19px;background:#a8a8a8"></div>
<div class="pl" style="top:278px"></div>
<div class="t" style="left:38px;top:262px;letter-spacing:-.15px">Status</div>
<div style="left:135px;top:260px;width:1px;height:19px;background:#a8a8a8"></div>
<div class="pdd" style="top:261px"></div><svg style="left:204px;top:268px" width="7" height="4"><path d="M0 0h7l-3.500 4z" fill="#000"/></svg>
<div class="pl" style="top:297px"></div>
<div class="t" style="left:38px;top:281px;letter-spacing:-.15px">Priority</div>
<div style="left:135px;top:279px;width:1px;height:19px;background:#a8a8a8"></div>
<div class="pdd" style="top:280px"></div><svg style="left:204px;top:287px" width="7" height="4"><path d="M0 0h7l-3.500 4z" fill="#000"/></svg>
<div class="pl" style="top:316px"></div>
<div class="t" style="left:38px;top:300px;letter-spacing:-.15px">Actual time</div>
<div style="left:135px;top:298px;width:1px;height:19px;background:#a8a8a8"></div>
<div class="pdd" style="top:299px"></div><svg style="left:204px;top:306px" width="7" height="4"><path d="M0 0h7l-3.500 4z" fill="#000"/></svg>
<div class="pl" style="top:335px"></div>
<div class="t" style="left:38px;top:319px;letter-spacing:-.15px">Estimated Time</div>
<div style="left:135px;top:317px;width:1px;height:19px;background:#a8a8a8"></div>
<div class="pdd" style="top:318px"></div><svg style="left:204px;top:325px" width="7" height="4"><path d="M0 0h7l-3.500 4z" fill="#000"/></svg>
<div class="pl" style="top:354px"></div>
<svg style="left:11px;top:341px" width="9" height="9"><rect x=".5" y=".5" width="8" height="8" rx="1" fill="#fff" stroke="#8a8a8a"/><rect x="2" y="4" width="5" height="1" fill="#333"/></svg>
<div class="t pb" style="left:25px;top:338px">By Date</div>
<div class="pl" style="top:373px"></div>
<div class="t" style="left:38px;top:357px;letter-spacing:-.15px">Date Range</div>
<div style="left:135px;top:355px;width:1px;height:19px;background:#a8a8a8"></div>
<div class="pdd" style="top:356px"></div><svg style="left:204px;top:363px" width="7" height="4"><path d="M0 0h7l-3.500 4z" fill="#000"/></svg>
<div class="pl" style="top:392px"></div>
<div class="t" style="left:38px;top:376px;letter-spacing:-.15px">Date Created</div>
<div style="left:135px;top:374px;width:1px;height:19px;background:#a8a8a8"></div>
<div class="pdd" style="top:375px"></div><svg style="left:204px;top:382px" width="7" height="4"><path d="M0 0h7l-3.500 4z" fill="#000"/></svg>
<div class="pl" style="top:411px"></div>
<div class="t" style="left:38px;top:395px;letter-spacing:-.15px">Date Last Modified</div>
<div style="left:135px;top:393px;width:1px;height:19px;background:#a8a8a8"></div>
<div class="pdd" style="top:394px"></div><svg style="left:204px;top:401px" width="7" height="4"><path d="M0 0h7l-3.500 4z" fill="#000"/></svg>
<div class="pl" style="top:430px"></div>
<div class="t" style="left:38px;top:414px;letter-spacing:-.15px">Date Started</div>
<div style="left:135px;top:412px;width:1px;height:19px;background:#a8a8a8"></div>
<div class="pdd" style="top:413px"></div><svg style="left:204px;top:420px" width="7" height="4"><path d="M0 0h7l-3.500 4z" fill="#000"/></svg>
<div class="pl" style="top:449px"></div>
<div class="t" style="left:38px;top:433px;letter-spacing:-.15px">Date Completed</div>
<div style="left:135px;top:431px;width:1px;height:19px;background:#a8a8a8"></div>
<div class="pdd" style="top:432px"></div><svg style="left:204px;top:439px" width="7" height="4"><path d="M0 0h7l-3.500 4z" fill="#000"/></svg>
<div class="pl" style="top:468px"></div>
<svg style="left:11px;top:455px" width="9" height="9"><rect x=".5" y=".5" width="8" height="8" rx="1" fill="#fff" stroke="#8a8a8a"/><rect x="2" y="4" width="5" height="1" fill="#333"/></svg>
<div class="t pb" style="left:25px;top:452px">By Resource</div>
<div class="pl" style="top:487px"></div>
<div class="t" style="left:38px;top:471px;letter-spacing:-.15px">Owner</div>
<div style="left:135px;top:469px;width:1px;height:19px;background:#a8a8a8"></div>
<div class="pdd" style="top:470px"></div><svg style="left:204px;top:477px" width="7" height="4"><path d="M0 0h7l-3.500 4z" fill="#000"/></svg>
<div class="pl" style="top:506px"></div>
<div class="t" style="left:38px;top:490px;letter-spacing:-.15px">Assignment</div>
<div style="left:135px;top:488px;width:1px;height:19px;background:#a8a8a8"></div>
<div class="pdd" style="top:489px"></div><svg style="left:204px;top:496px" width="7" height="4"><path d="M0 0h7l-3.500 4z" fill="#000"/></svg>
<div class="pl" style="top:525px"></div>
<div class="t" style="left:38px;top:509px;letter-spacing:-.15px">Department</div>
<div style="left:135px;top:507px;width:1px;height:19px;background:#a8a8a8"></div>
<div class="pdd" style="top:508px"></div><svg style="left:204px;top:515px" width="7" height="4"><path d="M0 0h7l-3.500 4z" fill="#000"/></svg>
<div class="t pb" style="left:25px;top:528px">Custom Fields</div>
<div id="grid">
<div class="hl" style="left:237px;top:179px;width:4px"></div><div class="hl" style="left:256px;top:198px;width:4px"></div><div class="hl" style="left:256px;top:217px;width:4px"></div><div class="hl" style="left:275px;top:236px;width:4px"></div><div class="hl" style="left:289px;top:255px;width:9px"></div><div class="hl" style="left:289px;top:274px;width:9px"></div><div class="hl" style="left:289px;top:293px;width:9px"></div><div class="hl" style="left:289px;top:312px;width:9px"></div><div class="hl" style="left:289px;top:331px;width:9px"></div><div class="hl" style="left:289px;top:350px;width:9px"></div><div class="hl" style="left:289px;top:369px;width:9px"></div><div class="hl" style="left:275px;top:388px;width:4px"></div><div class="hl" style="left:294px;top:407px;width:4px"></div><div class="hl" style="left:308px;top:426px;width:9px"></div><div class="hl" style="left:308px;top:445px;width:9px"></div><div class="hl" style="left:308px;top:464px;width:9px"></div><div class="hl" style="left:308px;top:483px;width:9px"></div><div class="hl" style="left:308px;top:502px;width:9px"></div><div class="hl" style="left:294px;top:521px;width:4px"></div><div class="hl" style="left:308px;top:540px;width:9px"></div><div class="hl" style="left:308px;top:559px;width:9px"></div><div class="hl" style="left:308px;top:578px;width:9px"></div><div class="hl" style="left:308px;top:597px;width:9px"></div><div class="hl" style="left:308px;top:616px;width:9px"></div><div class="hl" style="left:256px;top:635px;width:4px"></div><div class="hl" style="left:256px;top:654px;width:4px"></div><div class="vl" style="left:250px;top:191px;height:464px"></div><div class="vl" style="left:269px;top:229px;height:160px"></div><div class="vl" style="left:288px;top:247px;height:123px"></div><div class="vl" style="left:288px;top:399px;height:123px"></div><div class="vl" style="left:307px;top:419px;height:84px"></div><div class="vl" style="left:307px;top:533px;height:84px"></div>
<div class="row grp" style="top:171px">
<div class="bg" style="left:260px;width:1013px"></div>
<div class="vls"></div>
<div class="nm" style="left:263px;letter-spacing:-0.332px">Six Sigma demo database</div>
<svg class="ic" style="left:227px;top:4px" width="9" height="9"><use href="#minus"/></svg>
<svg class="ic" style="left:240px;top:0px" width="18" height="18"><use href="#ifolder"/></svg>
<div class="cco">0 %</div>
</div>
<div class="row grp" style="top:190px">
<div class="bg" style="left:279px;width:994px"></div>
<div class="vls"></div>
<div class="nm" style="left:282px;letter-spacing:-0.331px">&quot;Define&quot; Phase</div>
<svg class="ic" style="left:246px;top:4px" width="9" height="9"><use href="#plus"/></svg>
<svg class="ic" style="left:259px;top:0px" width="18" height="18"><use href="#ifolder"/></svg>
<div class="cco">0 %</div>
</div>
<div class="row grp sel" style="top:209px">
<div class="bg" style="left:279px;width:994px"></div>
<div class="vls"></div>
<div class="nm b" style="left:282px;transform:scaleX(1.0818)">&quot;Measure&quot; Phase</div>
<svg class="ic" style="left:246px;top:4px" width="9" height="9"><use href="#minus"/></svg>
<svg class="ic" style="left:259px;top:0px" width="18" height="18"><use href="#ifilt"/></svg>
<div class="cco b">0 %</div>
</div>
<div class="row grp" style="top:228px">
<div class="bg" style="left:298px;width:975px"></div>
<div class="vls"></div>
<div class="nm b" style="left:301px;transform:scaleX(1.0940)">Define the Current State</div>
<svg class="ic" style="left:265px;top:4px" width="9" height="9"><use href="#minus"/></svg>
<svg class="ic" style="left:278px;top:0px" width="18" height="18"><use href="#ifilt"/></svg>
<div class="cco b">0 %</div>
</div>
<div class="row" style="top:247px">
<div class="bg" style="left:317px;width:956px"></div>
<div class="nm" style="left:320px;letter-spacing:-0.130px">Assess the VSM to detect any waste</div>
<svg class="ic" style="left:297px;top:0px" width="18" height="18"><use href="#itask"/></svg>
<div class="cid">63</div>
<svg class="ic" style="left:894px;top:0px" width="18" height="18"><use href="#icreated"/></svg><div class="cst">Created</div>
<svg class="ic" style="left:1044px;top:0px" width="18" height="18"><use href="#igreen"/></svg><div class="cpr">Normal</div>
<div class="cco">0 %</div>
</div>
<div class="row" style="top:266px">
<div class="bg" style="left:317px;width:956px"></div>
<div class="nm" style="left:320px;letter-spacing:-0.041px">Define inputs of the process/system</div>
<svg class="ic" style="left:297px;top:0px" width="18" height="18"><use href="#itask"/></svg>
<div class="cid">60</div>
<svg class="ic" style="left:894px;top:0px" width="18" height="18"><use href="#icreated"/></svg><div class="cst">Created</div>
<svg class="ic" style="left:1044px;top:0px" width="18" height="18"><use href="#igreen"/></svg><div class="cpr">Normal</div>
<div class="cco">0 %</div>
</div>
<div class="row" style="top:285px">
<div class="bg" style="left:317px;width:956px"></div>
<div class="nm" style="left:320px;letter-spacing:-0.081px">Design a future state value stream map</div>
<svg class="ic" style="left:297px;top:0px" width="18" height="18"><use href="#itask"/></svg>
<div class="cid">65</div>
<svg class="ic" style="left:894px;top:0px" width="18" height="18"><use href="#icreated"/></svg><div class="cst">Created</div>
<svg class="ic" style="left:1044px;top:0px" width="18" height="18"><use href="#igreen"/></svg><div class="cpr">Normal</div>
<div class="cco">0 %</div>
</div>
<div class="row" style="top:304px">
<div class="bg" style="left:317px;width:956px"></div>
<div class="nm" style="left:320px;letter-spacing:-0.069px">Design a value stream map showing the current state of the process/system</div>
<svg class="ic" style="left:297px;top:0px" width="18" height="18"><use href="#itask"/></svg>
<div class="cid">62</div>
<svg class="ic" style="left:894px;top:0px" width="18" height="18"><use href="#icreated"/></svg><div class="cst">Created</div>
<svg class="ic" style="left:1044px;top:0px" width="18" height="18"><use href="#igreen"/></svg><div class="cpr">Normal</div>
<div class="cco">0 %</div>
</div>
<div class="row" style="top:323px">
<div class="bg" style="left:317px;width:956px"></div>
<div class="nm" style="left:320px;letter-spacing:0.103px">Identify outputs (the target product) of the process/system</div>
<svg class="ic" style="left:297px;top:0px" width="18" height="18"><use href="#itask"/></svg>
<div class="cid">61</div>
<svg class="ic" style="left:894px;top:0px" width="18" height="18"><use href="#icreated"/></svg><div class="cst">Created</div>
<svg class="ic" style="left:1044px;top:0px" width="18" height="18"><use href="#igreen"/></svg><div class="cpr">Normal</div>
<div class="cco">0 %</div>
</div>
<div class="row" style="top:342px">
<div class="bg" style="left:317px;width:956px"></div>
<div class="nm" style="left:320px;letter-spacing:-0.127px">Make an action plan for eliminating the waste</div>
<svg class="ic" style="left:297px;top:0px" width="18" height="18"><use href="#itask"/></svg>
<div class="cid">64</div>
<svg class="ic" style="left:894px;top:0px" width="18" height="18"><use href="#icreated"/></svg><div class="cst">Created</div>
<svg class="ic" style="left:1044px;top:0px" width="18" height="18"><use href="#igreen"/></svg><div class="cpr">Normal</div>
<div class="cco">0 %</div>
</div>
<div class="row" style="top:361px">
<div class="bg" style="left:317px;width:956px"></div>
<div class="nm" style="left:320px;letter-spacing:-0.019px">Make an action plan for reaching the future state</div>
<svg class="ic" style="left:297px;top:0px" width="18" height="18"><use href="#itask"/></svg>
<div class="cid">66</div>
<svg class="ic" style="left:894px;top:0px" width="18" height="18"><use href="#icreated"/></svg><div class="cst">Created</div>
<svg class="ic" style="left:1044px;top:0px" width="18" height="18"><use href="#igreen"/></svg><div class="cpr">Normal</div>
<div class="cco">0 %</div>
</div>
<div class="row grp" style="top:380px">
<div class="bg" style="left:298px;width:975px"></div>
<div class="vls"></div>
<div class="nm b" style="left:301px;transform:scaleX(1.1007)">Analyze the Measurement System</div>
<svg class="ic" style="left:265px;top:4px" width="9" height="9"><use href="#minus"/></svg>
<svg class="ic" style="left:278px;top:0px" width="18" height="18"><use href="#ifilt"/></svg>
<div class="cco b">0 %</div>
</div>
<div class="row grp" style="top:399px">
<div class="bg" style="left:317px;width:956px"></div>
<div class="vls"></div>
<div class="nm b" style="left:320px;transform:scaleX(1.0513)">Reviewing</div>
<svg class="ic" style="left:284px;top:4px" width="9" height="9"><use href="#minus"/></svg>
<svg class="ic" style="left:297px;top:0px" width="18" height="18"><use href="#ifilt"/></svg>
<div class="cco b">0 %</div>
</div>
<div class="row" style="top:418px">
<div class="bg" style="left:336px;width:937px"></div>
<div class="nm" style="left:339px;letter-spacing:-0.094px">Make a report on system reviewing.</div>
<svg class="ic" style="left:316px;top:0px" width="18" height="18"><use href="#itask"/></svg>
<div class="cid">59</div>
<svg class="ic" style="left:894px;top:0px" width="18" height="18"><use href="#icreated"/></svg><div class="cst">Created</div>
<svg class="ic" style="left:1044px;top:0px" width="18" height="18"><use href="#igreen"/></svg><div class="cpr">Normal</div>
<div class="cco">0 %</div>
</div>
<div class="row" style="top:437px">
<div class="bg" style="left:336px;width:937px"></div>
<div class="nm" style="left:339px;letter-spacing:-0.071px">Review accuracy of the system</div>
<svg class="ic" style="left:316px;top:0px" width="18" height="18"><use href="#itask"/></svg>
<div class="cid">57</div>
<svg class="ic" style="left:894px;top:0px" width="18" height="18"><use href="#icreated"/></svg><div class="cst">Created</div>
<svg class="ic" style="left:1044px;top:0px" width="18" height="18"><use href="#igreen"/></svg><div class="cpr">Normal</div>
<div class="cco">0 %</div>
</div>
<div class="row" style="top:456px">
<div class="bg" style="left:336px;width:937px"></div>
<div class="nm" style="left:339px;letter-spacing:-0.083px">Review appropriateness of the system</div>
<svg class="ic" style="left:316px;top:0px" width="18" height="18"><use href="#itask"/></svg>
<div class="cid">58</div>
<svg class="ic" style="left:894px;top:0px" width="18" height="18"><use href="#icreated"/></svg><div class="cst">Created</div>
<svg class="ic" style="left:1044px;top:0px" width="18" height="18"><use href="#igreen"/></svg><div class="cpr">Normal</div>
<div class="cco">0 %</div>
</div>
<div class="row" style="top:475px">
<div class="bg" style="left:336px;width:937px"></div>
<div class="nm" style="left:339px;letter-spacing:-0.144px">Review precision of the measurement system</div>
<svg class="ic" style="left:316px;top:0px" width="18" height="18"><use href="#itask"/></svg>
<div class="cid">55</div>
<svg class="ic" style="left:894px;top:0px" width="18" height="18"><use href="#icreated"/></svg><div class="cst">Created</div>
<svg class="ic" style="left:1044px;top:0px" width="18" height="18"><use href="#igreen"/></svg><div class="cpr">Normal</div>
<div class="cco">0 %</div>
</div>
<div class="row" style="top:494px">
<div class="bg" style="left:336px;width:937px"></div>
<div class="nm" style="left:339px;letter-spacing:-0.009px">Review repeatability of the system</div>
<svg class="ic" style="left:316px;top:0px" width="18" height="18"><use href="#itask"/></svg>
<div class="cid">56</div>
<svg class="ic" style="left:894px;top:0px" width="18" height="18"><use href="#icreated"/></svg><div class="cst">Created</div>
<svg class="ic" style="left:1044px;top:0px" width="18" height="18"><use href="#igreen"/></svg><div class="cpr">Normal</div>
<div class="cco">0 %</div>
</div>
<div class="row grp" style="top:513px">
<div class="bg" style="left:317px;width:956px"></div>
<div class="vls"></div>
<div class="nm b" style="left:320px;transform:scaleX(1.0727)">Verifying</div>
<svg class="ic" style="left:284px;top:4px" width="9" height="9"><use href="#minus"/></svg>
<svg class="ic" style="left:297px;top:0px" width="18" height="18"><use href="#ifilt"/></svg>
<div class="cco b">0 %</div>
</div>
<div class="row" style="top:532px">
<div class="bg" style="left:336px;width:937px"></div>
<div class="nm" style="left:339px;letter-spacing:-0.077px">Make a report on system verification</div>
<svg class="ic" style="left:316px;top:0px" width="18" height="18"><use href="#itask"/></svg>
<div class="cid">54</div>
<svg class="ic" style="left:894px;top:0px" width="18" height="18"><use href="#icreated"/></svg><div class="cst">Created</div>
<svg class="ic" style="left:1044px;top:0px" width="18" height="18"><use href="#igreen"/></svg><div class="cpr">Normal</div>
<div class="cco">0 %</div>
</div>
<div class="row" style="top:551px">
<div class="bg" style="left:336px;width:937px"></div>
<div class="nm" style="left:339px;letter-spacing:-0.025px">Verify accuracy of the system</div>
<svg class="ic" style="left:316px;top:0px" width="18" height="18"><use href="#itask"/></svg>
<div class="cid">52</div>
<svg class="ic" style="left:894px;top:0px" width="18" height="18"><use href="#icreated"/></svg><div class="cst">Created</div>
<svg class="ic" style="left:1044px;top:0px" width="18" height="18"><use href="#igreen"/></svg><div class="cpr">Normal</div>
<div class="cco">0 %</div>
</div>
<div class="row" style="top:570px">
<div class="bg" style="left:336px;width:937px"></div>
<div class="nm" style="left:339px;letter-spacing:-0.009px">Verify appropriateness of the system</div>
<svg class="ic" style="left:316px;top:0px" width="18" height="18"><use href="#itask"/></svg>
<div class="cid">53</div>
<svg class="ic" style="left:894px;top:0px" width="18" height="18"><use href="#icreated"/></svg><div class="cst">Created</div>
<svg class="ic" style="left:1044px;top:0px" width="18" height="18"><use href="#igreen"/></svg><div class="cpr">Normal</div>
<div class="cco">0 %</div>
</div>
<div class="row" style="top:589px">
<div class="bg" style="left:336px;width:937px"></div>
<div class="nm" style="left:339px;letter-spacing:-0.112px">Verify precision of the measurement system</div>
<svg class="ic" style="left:316px;top:0px" width="18" height="18"><use href="#itask"/></svg>
<div class="cid">50</div>
<svg class="ic" style="left:894px;top:0px" width="18" height="18"><use href="#icreated"/></svg><div class="cst">Created</div>
<svg class="ic" style="left:1044px;top:0px" width="18" height="18"><use href="#igreen"/></svg><div class="cpr">Normal</div>
<div class="cco">0 %</div>
</div>
<div class="row" style="top:608px">
<div class="bg" style="left:336px;width:937px"></div>
<div class="nm" style="left:339px;letter-spacing:0.030px">Verify repeatability of the system</div>
<svg class="ic" style="left:316px;top:0px" width="18" height="18"><use href="#itask"/></svg>
<div class="cid">51</div>
<svg class="ic" style="left:894px;top:0px" width="18" height="18"><use href="#icreated"/></svg><div class="cst">Created</div>
<svg class="ic" style="left:1044px;top:0px" width="18" height="18"><use href="#igreen"/></svg><div class="cpr">Normal</div>
<div class="cco">0 %</div>
</div>
<div class="row grp" style="top:627px">
<div class="bg" style="left:279px;width:994px"></div>
<div class="vls"></div>
<div class="nm" style="left:282px;letter-spacing:-0.186px">&quot;Improve&quot; Phase</div>
<svg class="ic" style="left:246px;top:4px" width="9" height="9"><use href="#plus"/></svg>
<svg class="ic" style="left:259px;top:0px" width="18" height="18"><use href="#ifolder"/></svg>
<div class="cco">0 %</div>
</div>
<div class="row grp" style="top:646px">
<div class="bg" style="left:279px;width:994px"></div>
<div class="vls"></div>
<div class="nm" style="left:282px;letter-spacing:-0.286px">&quot;Control&quot; Phase</div>
<svg class="ic" style="left:246px;top:4px" width="9" height="9"><use href="#plus"/></svg>
<svg class="ic" style="left:259px;top:0px" width="18" height="18"><use href="#ifolder"/></svg>
<div class="cco">0 %</div>
</div>
<div class="cv" style="left:730px;top:171px;height:494px"></div>
<div class="cv" style="left:796px;top:171px;height:494px"></div>
<div class="cv" style="left:891px;top:171px;height:494px"></div>
<div class="cv" style="left:966px;top:171px;height:494px"></div>
<div class="cv" style="left:1041px;top:171px;height:494px"></div>
<div class="cv" style="left:1117px;top:171px;height:494px"></div>
<div class="cv" style="left:1198px;top:171px;height:494px"></div>
<div class="cv" style="left:1273px;top:171px;height:494px"></div>
</div>
</body></html>
